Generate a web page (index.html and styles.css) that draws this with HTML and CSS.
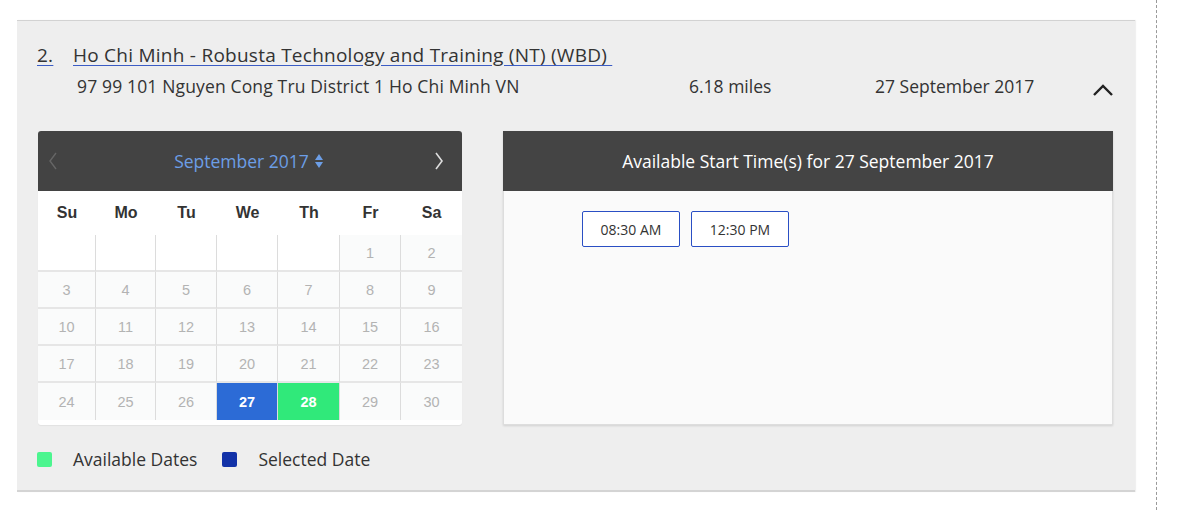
FILE: index.html
```html
<!DOCTYPE html>
<html>
<head>
<meta charset="utf-8">
<link rel="stylesheet" href="styles.css">
</head>
<body>
<div class="page">
  <section class="panel">
    <h2 class="title"><span class="num">2.</span><span class="name">Ho Chi Minh - Robusta Technology and Training (NT) (WBD)&nbsp;</span></h2>
    <div class="meta">
      <span class="addr">97 99 101 Nguyen Cong Tru District 1 Ho Chi Minh VN</span>
      <span class="dist">6.18 miles</span>
      <span class="date">27 September 2017</span>
      <svg class="chev" width="22" height="14" viewBox="0 0 22 14"><path d="M2 12 L11 3 L20 12" fill="none" stroke="#222" stroke-width="2.4"/></svg>
    </div>
    <div class="booking">
      <div class="cal">
        <div class="cal-head">
          <svg class="nav prev" width="10" height="20" viewBox="0 0 10 20"><path d="M8 2 L2 10 L8 18" fill="none" stroke="#666" stroke-width="1.4"/></svg>
          <span class="month">September 2017 <svg width="10" height="16" viewBox="0 0 10 16"><path d="M5 1 L9 7 L1 7 Z M5 15 L9 9 L1 9 Z" fill="#6c9ee6"/></svg></span>
          <svg class="nav next" width="10" height="20" viewBox="0 0 10 20"><path d="M2 2 L8 10 L2 18" fill="none" stroke="#ddd" stroke-width="1.6"/></svg>
        </div>
        <div class="dow">
          <span>Su</span><span>Mo</span><span>Tu</span><span>We</span><span>Th</span><span>Fr</span><span>Sa</span>
        </div>
        <div class="days">
          <span class="empty"></span><span class="empty"></span><span class="empty"></span><span class="empty"></span><span class="empty"></span><span>1</span><span>2</span>
          <span>3</span><span>4</span><span>5</span><span>6</span><span>7</span><span>8</span><span>9</span>
          <span>10</span><span>11</span><span>12</span><span>13</span><span>14</span><span>15</span><span>16</span>
          <span>17</span><span>18</span><span>19</span><span>20</span><span>21</span><span>22</span><span>23</span>
          <span>24</span><span>25</span><span>26</span><span class="sel">27</span><span class="avail">28</span><span>29</span><span>30</span>
        </div>
      </div>
      <div class="times">
        <div class="times-head">Available Start Time(s) for 27 September 2017</div>
        <div class="slots">
          <button class="slot">08:30 AM</button>
          <button class="slot">12:30 PM</button>
        </div>
      </div>
    </div>
    <div class="legend">
      <span class="sw green"></span><span class="lbl">Available Dates</span>
      <span class="sw blue"></span><span class="lbl">Selected Date</span>
    </div>
  </section>
  <div class="rail"></div>
</div>
</body>
</html>
```
FILE: styles.css
```css
* { box-sizing: border-box; }
html, body { margin: 0; padding: 0; background: #fff; }
body { font-family: "Open Sans", "Noto Sans", sans-serif; color: #333; }

.page { display: flex; height: 510px; }

.panel {
  margin: 20px 0 0 17px;
  width: 1118px;
  height: 472px;
  background: #eeeeee;
  border-top: 1px solid #d2d2d2;
  border-bottom: 2px solid #d4d4d4;
  padding: 22px 0 0 20px;
  box-shadow: 1px 0 1px rgba(0,0,0,0.06);
}

.rail {
  margin-left: 21px;
  height: 510px;
  border-left: 1px dashed #999;
}

.title {
  margin: 0;
  font-size: 19px;
  font-weight: 400;
  letter-spacing: 0.25px;
  line-height: 24px;
  color: #333;
  display: flex;
}
.title .num { width: 36px; text-decoration: underline; text-decoration-color: #3b5cc4; text-underline-offset: 3px; }
.title .name { text-decoration: underline; text-decoration-color: #3b5cc4; text-underline-offset: 3px; }

.meta {
  display: flex;
  align-items: center;
  padding-left: 40px;
  margin-top: 4px;
  height: 30px;
  font-size: 17.5px;
  color: #333;
}
.addr { width: 612px; letter-spacing: 0.15px; }
.dist { width: 186px; }
.date { width: 217px; }
.chev { margin-top: 8px; }

.booking {
  display: flex;
  gap: 41px;
  margin-top: 30px;
  padding-left: 1px;
}

.cal {
  width: 424px;
  height: 294px;
  background: #fff;
  border-radius: 3px;
  box-shadow: 0 1px 1px rgba(0,0,0,0.05);
}
.cal-head {
  height: 60px;
  background: #434343;
  border-radius: 3px 3px 0 0;
  display: flex;
  align-items: center;
  justify-content: space-between;
  padding: 0 18px 0 10px;
}
.month {
  color: #6c9ee6;
  font-size: 17.5px;
  display: flex;
  align-items: center;
  gap: 5px;
  margin-left: 6px;
}
.dow, .days {
  display: grid;
  grid-template-columns: 58px 60px 61px 61px 62px 61px 61px;
  font-family: "Liberation Sans", Arial, sans-serif;
  text-align: center;
}
.dow {
  height: 44px;
  align-items: center;
  font-weight: 700;
  font-size: 16px;
  color: #333;
}
.days {
  grid-auto-rows: 37px;
  font-size: 14.5px;
  color: #b3b3b3;
}
.days span {
  display: flex;
  align-items: center;
  justify-content: center;
  background: #fafbfb;
  border-right: 1px solid #dcdcdc;
  border-bottom: 2px solid #e6e6e6;
}
.days span:nth-child(7n) { border-right: 0; }
.days span:nth-child(n+29) { border-bottom: 0; }
.days span.empty { background: #fff; }
.days .sel { background: #2c6bd6; color: #fff; font-weight: 700; }
.days .avail { background: #30e97a; color: #fff; font-weight: 700; }

.times {
  width: 610px;
  height: 294px;
  background: #fafafa;
  border: 1px solid #dddddd;
  box-shadow: 0 1px 2px rgba(0,0,0,0.12);
}
.times-head {
  height: 60px;
  margin: -1px -1px 0;
  background: #444;
  color: #fff;
  font-size: 17.5px;
  display: flex;
  align-items: center;
  justify-content: center;
}
.slots {
  display: flex;
  gap: 11px;
  padding: 20px 0 0 78px;
}
.slot {
  width: 98px;
  height: 36px;
  background: #fff;
  border: 1.5px solid #2a4fc4;
  border-radius: 2px;
  font-family: "Open Sans", "Noto Sans", sans-serif;
  font-size: 14px;
  color: #333;
  padding: 0;
}

.legend {
  display: flex;
  align-items: center;
  margin-top: 22px;
  height: 24px;
  font-size: 17.5px;
  color: #333;
}
.sw { width: 15px; height: 15px; border-radius: 2px; }
.sw.green { background: #4cf58f; }
.sw.blue { background: #1232a8; margin-left: 25px; }
.lbl { margin-left: 21px; }
```
